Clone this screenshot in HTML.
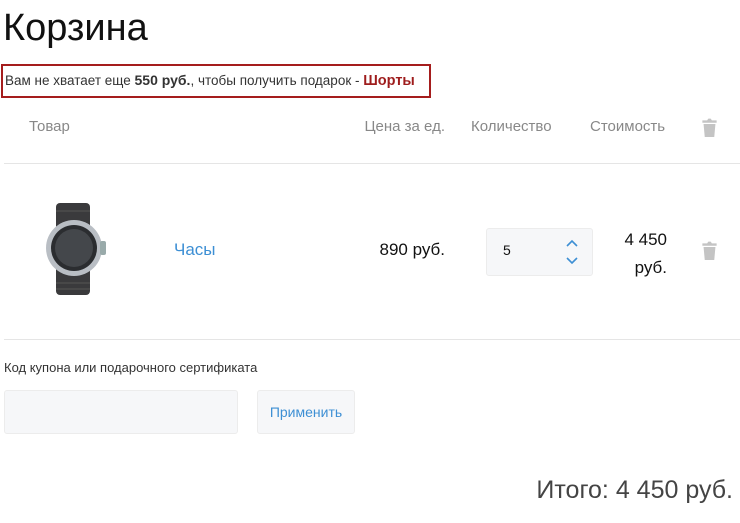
<!DOCTYPE html>
<html><head><meta charset="utf-8"><style>
body{margin:0;width:740px;height:523px;background:#fff;font-family:"Liberation Sans","DejaVu Sans",sans-serif;position:relative;overflow:hidden;color:#111}
.a{position:absolute;white-space:nowrap}
.h{color:#888;font-size:15px}
.tr{position:absolute;width:17px;height:19px}
</style></head><body>
<div class="a" style="left:3px;top:7px;font-size:38px;color:#111">Корзина</div>
<div class="a" style="left:1px;top:64px;width:426px;height:30px;border:2px solid #a51d1d"></div>
<div class="a" style="left:5px;top:72px;font-size:13.5px;color:#333">Вам не хватает еще <b style="font-size:14px">550 руб.</b>, чтобы получить подарок - <b style="color:#9e1c1c;font-size:14.5px">Шорты</b></div>
<div class="a h" style="left:29px;top:118px">Товар</div>
<div class="a h" style="right:295px;top:118px">Цена за ед.</div>
<div class="a h" style="left:471px;top:118px">Количество</div>
<div class="a h" style="left:590px;top:118px">Стоимость</div>
<svg class="tr" style="left:701px;top:118px" viewBox="0 0 14 16"><path d="M1 2h4l1-1.5h2L9 2h4v2H1z M2 5h10l-1 11H3z" fill="#c4c4c4"/></svg>
<div class="a" style="left:4px;top:163px;width:736px;height:1px;background:#e5e5e5"></div>
<svg class="a" style="left:44px;top:203px" width="68" height="92" viewBox="0 0 68 92">
<rect x="12" y="0" width="34" height="92" rx="4" fill="#3a3a3c"/>
<g stroke="#555" stroke-width="1"><line x1="12" y1="8" x2="46" y2="8"/><line x1="12" y1="80" x2="46" y2="80"/><line x1="12" y1="86" x2="46" y2="86"/></g>
<circle cx="30" cy="45" r="28" fill="#b9bec4"/>
<circle cx="30" cy="45" r="23" fill="#2b2d30"/>
<circle cx="30" cy="45" r="19" fill="#44474b"/>
<rect x="56" y="38" width="6" height="14" rx="2" fill="#9aa"/>
</svg>
<div class="a" style="left:174px;top:240px;font-size:17px;color:#3d8fd4">Часы</div>
<div class="a" style="right:295px;top:240px;font-size:17px;color:#111">890 руб.</div>
<div class="a" style="left:486px;top:228px;width:105px;height:46px;background:#f6f7f9;border:1px solid #ececec;border-radius:3px"></div>
<div class="a" style="left:503px;top:242px;font-size:14px">5</div>
<svg class="a" style="left:564px;top:236px" width="16" height="32" viewBox="0 0 16 32"><path d="M3 10l5-5 5 5M3 22l5 5 5-5" stroke="#3d8fd4" stroke-width="1.6" fill="none"/></svg>
<div class="a" style="right:73px;top:226px;font-size:17px;text-align:right;line-height:28px">4 450<br>руб.</div>
<svg class="tr" style="left:701px;top:241px" viewBox="0 0 14 16"><path d="M1 2h4l1-1.5h2L9 2h4v2H1z M2 5h10l-1 11H3z" fill="#c4c4c4"/></svg>
<div class="a" style="left:4px;top:339px;width:736px;height:1px;background:#e5e5e5"></div>
<div class="a" style="left:4px;top:360px;font-size:13px;color:#333">Код купона или подарочного сертификата</div>
<div class="a" style="left:4px;top:390px;width:232px;height:42px;background:#f6f7f9;border:1px solid #ececec;border-radius:3px"></div>
<div class="a" style="left:257px;top:390px;width:96px;height:42px;background:#f6f7f9;border:1px solid #ececec;border-radius:3px;color:#3d8fd4;font-size:14px;line-height:42px;text-align:center">Применить</div>
<div class="a" style="right:7px;top:476px;font-size:25px;color:#444">Итого: 4 450 руб.</div>
</body></html>
